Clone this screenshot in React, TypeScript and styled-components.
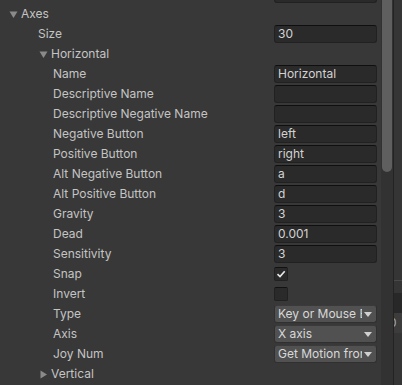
import React, { FC } from 'react';
import styled, { createGlobalStyle } from 'styled-components';

const Colors = {
	BG: '#383838',
	TEXT: '#c4c4c4',
	FIELD: '#2a2a2a',
	FIELD_BORDER: '#212121',
	POPUP: '#515151',
	POPUP_BORDER: '#303030',
};

const GlobalStyle = createGlobalStyle`
	html, body {
		margin: 0;
		padding: 0;
		background: ${Colors.BG};
		overflow: hidden;
	}
	* {
		box-sizing: border-box;
	}
`;

type Value =
	| { kind: 'text'; text: string }
	| { kind: 'toggle'; on: boolean }
	| { kind: 'popup'; text: string }
	| { kind: 'none' };

interface RowData {
	label: string;
	indent: number;
	fold?: 'open' | 'closed';
	value: Value;
}

const rows: RowData[] = [
	{ label: '', indent: 0, value: { kind: 'text', text: '' } },
	{ label: 'Axes', indent: 9, fold: 'open', value: { kind: 'none' } },
	{ label: 'Size', indent: 38, value: { kind: 'text', text: '30' } },
	{ label: 'Horizontal', indent: 39, fold: 'open', value: { kind: 'none' } },
	{ label: 'Name', indent: 53, value: { kind: 'text', text: 'Horizontal' } },
	{ label: 'Descriptive Name', indent: 53, value: { kind: 'text', text: '' } },
	{ label: 'Descriptive Negative Name', indent: 53, value: { kind: 'text', text: '' } },
	{ label: 'Negative Button', indent: 53, value: { kind: 'text', text: 'left' } },
	{ label: 'Positive Button', indent: 53, value: { kind: 'text', text: 'right' } },
	{ label: 'Alt Negative Button', indent: 53, value: { kind: 'text', text: 'a' } },
	{ label: 'Alt Positive Button', indent: 53, value: { kind: 'text', text: 'd' } },
	{ label: 'Gravity', indent: 53, value: { kind: 'text', text: '3' } },
	{ label: 'Dead', indent: 53, value: { kind: 'text', text: '0.001' } },
	{ label: 'Sensitivity', indent: 53, value: { kind: 'text', text: '3' } },
	{ label: 'Snap', indent: 53, value: { kind: 'toggle', on: true } },
	{ label: 'Invert', indent: 53, value: { kind: 'toggle', on: false } },
	{ label: 'Type', indent: 53, value: { kind: 'popup', text: 'Key or Mouse Button' } },
	{ label: 'Axis', indent: 53, value: { kind: 'popup', text: 'X axis' } },
	{ label: 'Joy Num', indent: 53, value: { kind: 'popup', text: 'Get Motion from all Joysticks' } },
	{ label: 'Vertical', indent: 39, fold: 'closed', value: { kind: 'none' } },
];

const FoldArrow: FC<{ open: boolean }> = ({ open }) => (
	<ArrowSvg width="9" height="9" viewBox="0 0 9 9">
		{open ? (
			<path d="M0.5 1.5 H8.5 L4.5 8 Z" fill="#8a8a8a" />
		) : (
			<path d="M1.5 0.5 V8.5 L8 4.5 Z" fill="#8a8a8a" />
		)}
	</ArrowSvg>
);

const Check = () => (
	<svg width="10" height="10" viewBox="0 0 10 10">
		<path d="M1.5 5.2 L4 7.5 L8.7 2.2" stroke="#e8e8e8" strokeWidth="1.6" fill="none" />
	</svg>
);

const ValueCell: FC<{ value: Value }> = ({ value }) => {
	switch (value.kind) {
		case 'text':
			return <TextField>{value.text}</TextField>;
		case 'toggle':
			return <Toggle>{value.on && <Check />}</Toggle>;
		case 'popup':
			return (
				<Popup>
					<PopupText>{value.text}</PopupText>
					<PopupArrow />
				</Popup>
			);
		default:
			return null;
	}
};

export default function App() {
	return (
		<Root>
			<GlobalStyle />
			<Inspector>
				<List>
					{rows.map((row, i) => (
						<Row key={i}>
							<Label indent={row.indent}>
								{row.fold && <FoldArrow open={row.fold === 'open'} />}
								{row.label}
							</Label>
							<ValueSlot>
								<ValueCell value={row.value} />
							</ValueSlot>
						</Row>
					))}
				</List>
			</Inspector>
			<Scrollbar>
				<Thumb />
			</Scrollbar>
			<SidePanel>
				<SideLine />
				<SideDark />
				<SideItem>0</SideItem>
			</SidePanel>
		</Root>
	);
}

const Root = styled.div`
	display: flex;
	width: 402px;
	height: 385px;
	background: ${Colors.BG};
	font-family: Inter, 'Noto Sans', sans-serif;
	font-size: 12px;
	color: ${Colors.TEXT};
	overflow: hidden;
`;

const Inspector = styled.div`
	width: 381px;
	overflow: hidden;
`;

const List = styled.div`
	display: flex;
	flex-direction: column;
	margin-top: -16px;
`;

const Row = styled.div`
	display: flex;
	align-items: center;
	height: 20px;
`;

const Label = styled.div<{ indent: number }>`
	display: flex;
	align-items: center;
	width: 274px;
	padding-left: ${(p) => p.indent}px;
	white-space: nowrap;
	overflow: hidden;
	line-height: 20px;
`;

const ArrowSvg = styled.svg`
	margin-right: 3px;
	flex-shrink: 0;
`;

const ValueSlot = styled.div`
	width: 103px;
	display: flex;
	align-items: center;
`;

const TextField = styled.div`
	width: 103px;
	height: 18px;
	background: ${Colors.FIELD};
	border: 1px solid ${Colors.FIELD_BORDER};
	border-top-color: #0f0f0f;
	border-radius: 3px;
	padding-left: 3px;
	line-height: 16px;
	color: #d2d2d2;
	white-space: nowrap;
	overflow: hidden;
`;

const Toggle = styled.div`
	width: 14px;
	height: 14px;
	background: ${Colors.FIELD};
	border: 1px solid ${Colors.FIELD_BORDER};
	border-top-color: #121212;
	border-radius: 2px;
	display: flex;
	align-items: center;
	justify-content: center;
`;

const Popup = styled.div`
	width: 103px;
	height: 18px;
	background: ${Colors.POPUP};
	border: 1px solid ${Colors.POPUP_BORDER};
	border-top-color: #3a3a3a;
	border-radius: 3px;
	display: flex;
	align-items: center;
	padding: 0 4px 0 3px;
	color: #d8d8d8;
`;

const PopupText = styled.span`
	flex: 1;
	white-space: nowrap;
	overflow: hidden;
	line-height: 16px;
`;

const PopupArrow = styled.span`
	width: 0;
	height: 0;
	margin-left: 2px;
	border-left: 4px solid transparent;
	border-right: 4px solid transparent;
	border-top: 5px solid #d0d0d0;
	flex-shrink: 0;
`;

const Scrollbar = styled.div`
	width: 12px;
	height: 100%;
	background: #323232;
	padding: 0 1px;
`;

const Thumb = styled.div`
	width: 10px;
	height: 172px;
	background: #5f5f5f;
	border-radius: 0 0 5px 5px;
`;

const SidePanel = styled.div`
	flex: 1;
	display: flex;
	flex-direction: column;
	border-left: 1px solid #232323;
	background: #353535;
	padding-top: 280px;
	overflow: hidden;
`;

const SideLine = styled.div`
	height: 1px;
	background: #4a4a4a;
	margin-bottom: 12px;
`;

const SideDark = styled.div`
	height: 20px;
	background: #282828;
`;

const SideItem = styled.div`
	height: 20px;
	background: #3c3c3c;
	line-height: 20px;
	margin-left: -5px;
	padding-left: 0;
	color: #a8a8a8;
`;
